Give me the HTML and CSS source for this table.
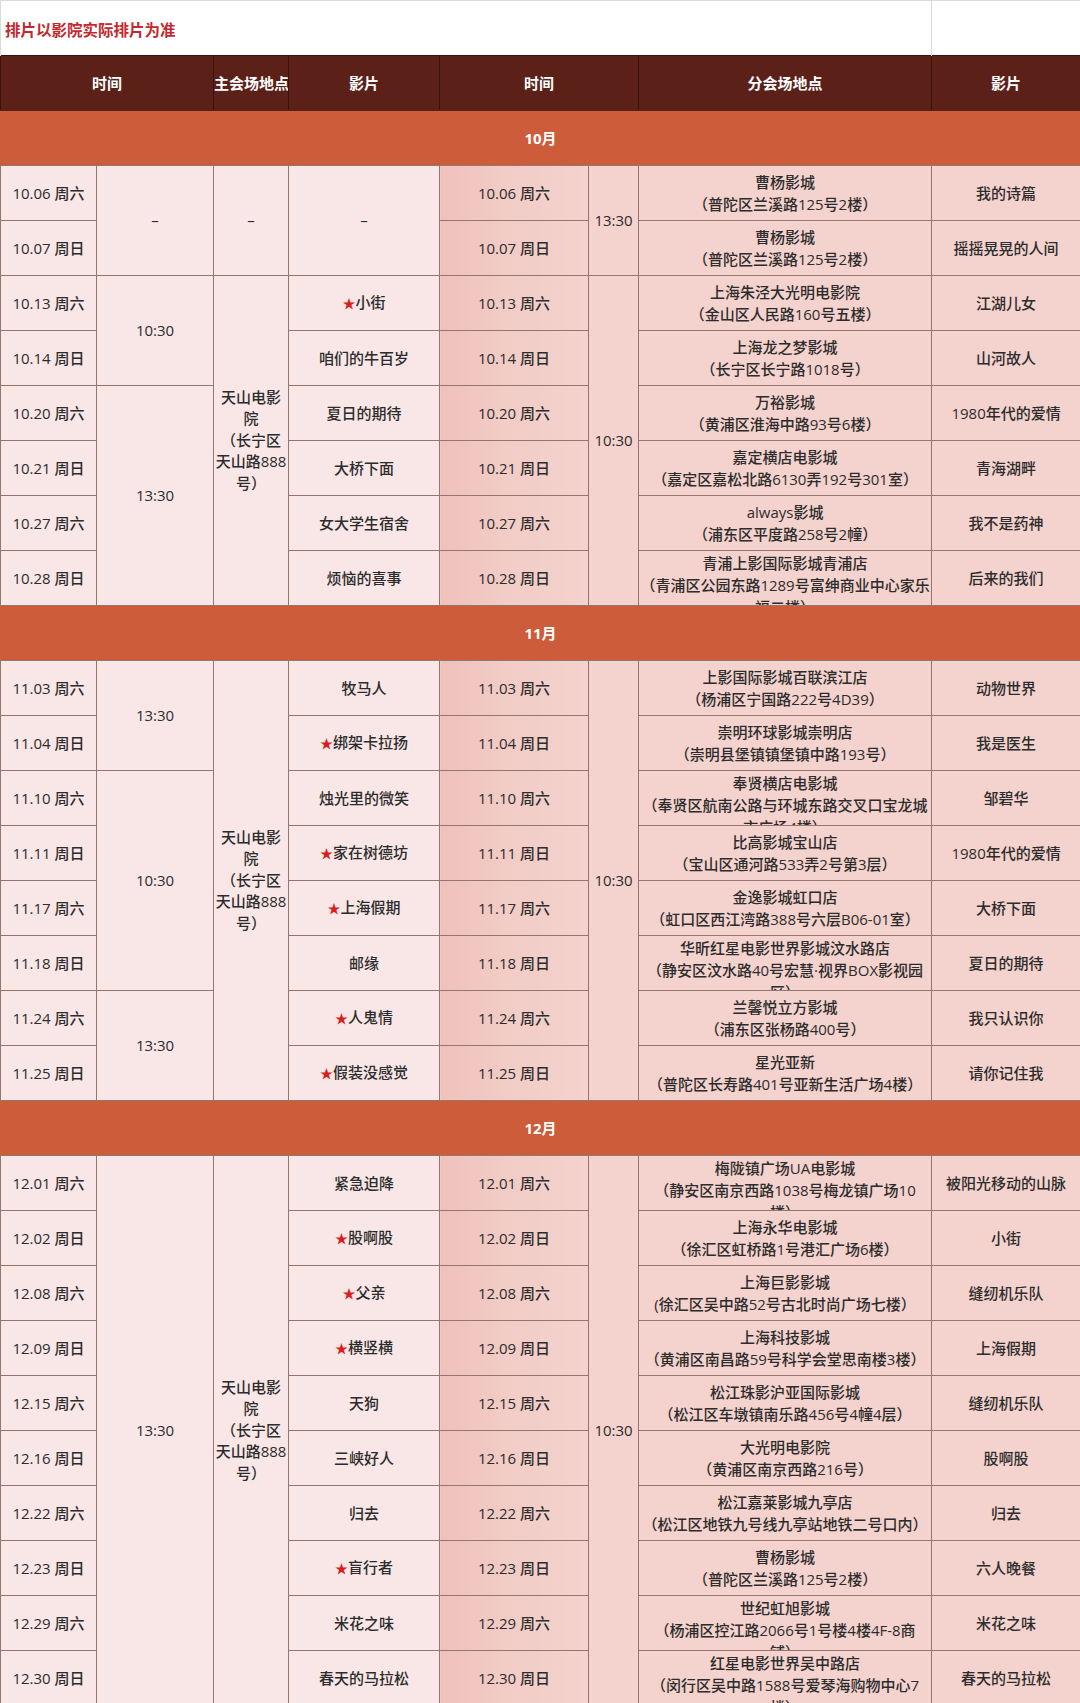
FILE: index.html
```html
<!DOCTYPE html>
<html lang="zh-CN">
<head>
<meta charset="utf-8">
<title>排片表</title>
<link rel="stylesheet" href="styles.css">
</head>
<body>
<table class="sched">
  <colgroup>
    <col class="c1"><col class="c2"><col class="c3"><col class="c4">
    <col class="c5"><col class="c6"><col class="c7"><col class="c8">
  </colgroup>
  <tbody>
    <tr class="note-row">
      <td colspan="7" class="note">排片以影院实际排片为准</td>
      <td class="note-side"></td>
    </tr>
    <tr class="head">
      <th colspan="2">时间</th>
      <th>主会场地点</th>
      <th>影片</th>
      <th colspan="2">时间</th>
      <th>分会场地点</th>
      <th>影片</th>
    </tr>

    <tr class="month"><td colspan="8">10月</td></tr>
    <tr>
      <td class="l">10.06 周六</td>
      <td class="l" rowspan="2">–</td>
      <td class="l" rowspan="2">–</td>
      <td class="l" rowspan="2">–</td>
      <td class="rd">10.06 周六</td>
      <td class="r" rowspan="2">13:30</td>
      <td class="r"><div class="v">曹杨影城<br>（普陀区兰溪路125号2楼）</div></td>
      <td class="r">我的诗篇</td>
    </tr>
    <tr>
      <td class="l">10.07 周日</td>
      <td class="rd">10.07 周日</td>
      <td class="r"><div class="v">曹杨影城<br>（普陀区兰溪路125号2楼）</div></td>
      <td class="r">摇摇晃晃的人间</td>
    </tr>
    <tr>
      <td class="l">10.13 周六</td>
      <td class="l" rowspan="2">10:30</td>
      <td class="l mv" rowspan="6">天山电影<br>院<br>（长宁区<br>天山路888<br>号）</td>
      <td class="l"><span class="star">★</span>小街</td>
      <td class="rd">10.13 周六</td>
      <td class="r" rowspan="6">10:30</td>
      <td class="r"><div class="v">上海朱泾大光明电影院<br>（金山区人民路160号五楼）</div></td>
      <td class="r">江湖儿女</td>
    </tr>
    <tr>
      <td class="l">10.14 周日</td>
      <td class="l">咱们的牛百岁</td>
      <td class="rd">10.14 周日</td>
      <td class="r"><div class="v">上海龙之梦影城<br>（长宁区长宁路1018号）</div></td>
      <td class="r">山河故人</td>
    </tr>
    <tr>
      <td class="l">10.20 周六</td>
      <td class="l" rowspan="4">13:30</td>
      <td class="l">夏日的期待</td>
      <td class="rd">10.20 周六</td>
      <td class="r"><div class="v">万裕影城<br>（黄浦区淮海中路93号6楼）</div></td>
      <td class="r">1980年代的爱情</td>
    </tr>
    <tr>
      <td class="l">10.21 周日</td>
      <td class="l">大桥下面</td>
      <td class="rd">10.21 周日</td>
      <td class="r"><div class="v">嘉定横店电影城<br>（嘉定区嘉松北路6130弄192号301室）</div></td>
      <td class="r">青海湖畔</td>
    </tr>
    <tr>
      <td class="l">10.27 周六</td>
      <td class="l">女大学生宿舍</td>
      <td class="rd">10.27 周六</td>
      <td class="r"><div class="v">always影城<br>（浦东区平度路258号2幢）</div></td>
      <td class="r">我不是药神</td>
    </tr>
    <tr>
      <td class="l">10.28 周日</td>
      <td class="l">烦恼的喜事</td>
      <td class="rd">10.28 周日</td>
      <td class="r"><div class="v">青浦上影国际影城青浦店<br>（青浦区公园东路1289号富绅商业中心家乐<br>福二楼）</div></td>
      <td class="r">后来的我们</td>
    </tr>

    <tr class="month"><td colspan="8">11月</td></tr>
    <tr>
      <td class="l">11.03 周六</td>
      <td class="l" rowspan="2">13:30</td>
      <td class="l mv" rowspan="8">天山电影<br>院<br>（长宁区<br>天山路888<br>号）</td>
      <td class="l">牧马人</td>
      <td class="rd">11.03 周六</td>
      <td class="r" rowspan="8">10:30</td>
      <td class="r"><div class="v">上影国际影城百联滨江店<br>（杨浦区宁国路222号4D39）</div></td>
      <td class="r">动物世界</td>
    </tr>
    <tr>
      <td class="l">11.04 周日</td>
      <td class="l"><span class="star">★</span>绑架卡拉扬</td>
      <td class="rd">11.04 周日</td>
      <td class="r"><div class="v">崇明环球影城崇明店<br>（崇明县堡镇镇堡镇中路193号）</div></td>
      <td class="r">我是医生</td>
    </tr>
    <tr>
      <td class="l">11.10 周六</td>
      <td class="l" rowspan="4">10:30</td>
      <td class="l">烛光里的微笑</td>
      <td class="rd">11.10 周六</td>
      <td class="r"><div class="v">奉贤横店电影城<br>（奉贤区航南公路与环城东路交叉口宝龙城<br>市广场4楼）</div></td>
      <td class="r">邹碧华</td>
    </tr>
    <tr>
      <td class="l">11.11 周日</td>
      <td class="l"><span class="star">★</span>家在树德坊</td>
      <td class="rd">11.11 周日</td>
      <td class="r"><div class="v">比高影城宝山店<br>（宝山区通河路533弄2号第3层）</div></td>
      <td class="r">1980年代的爱情</td>
    </tr>
    <tr>
      <td class="l">11.17 周六</td>
      <td class="l"><span class="star">★</span>上海假期</td>
      <td class="rd">11.17 周六</td>
      <td class="r"><div class="v">金逸影城虹口店<br>（虹口区西江湾路388号六层B06-01室）</div></td>
      <td class="r">大桥下面</td>
    </tr>
    <tr>
      <td class="l">11.18 周日</td>
      <td class="l">邮缘</td>
      <td class="rd">11.18 周日</td>
      <td class="r"><div class="v">华昕红星电影世界影城汶水路店<br>（静安区汶水路40号宏慧·视界BOX影视园<br>区）</div></td>
      <td class="r">夏日的期待</td>
    </tr>
    <tr>
      <td class="l">11.24 周六</td>
      <td class="l" rowspan="2">13:30</td>
      <td class="l"><span class="star">★</span>人鬼情</td>
      <td class="rd">11.24 周六</td>
      <td class="r"><div class="v">兰馨悦立方影城<br>（浦东区张杨路400号）</div></td>
      <td class="r">我只认识你</td>
    </tr>
    <tr>
      <td class="l">11.25 周日</td>
      <td class="l"><span class="star">★</span>假装没感觉</td>
      <td class="rd">11.25 周日</td>
      <td class="r"><div class="v">星光亚新<br>（普陀区长寿路401号亚新生活广场4楼）</div></td>
      <td class="r">请你记住我</td>
    </tr>

    <tr class="month"><td colspan="8">12月</td></tr>
    <tr>
      <td class="l">12.01 周六</td>
      <td class="l" rowspan="10">13:30</td>
      <td class="l mv" rowspan="10">天山电影<br>院<br>（长宁区<br>天山路888<br>号）</td>
      <td class="l">紧急迫降</td>
      <td class="rd">12.01 周六</td>
      <td class="r" rowspan="10">10:30</td>
      <td class="r"><div class="v">梅陇镇广场UA电影城<br>（静安区南京西路1038号梅龙镇广场10<br>楼）</div></td>
      <td class="r">被阳光移动的山脉</td>
    </tr>
    <tr>
      <td class="l">12.02 周日</td>
      <td class="l"><span class="star">★</span>股啊股</td>
      <td class="rd">12.02 周日</td>
      <td class="r"><div class="v">上海永华电影城<br>（徐汇区虹桥路1号港汇广场6楼）</div></td>
      <td class="r">小街</td>
    </tr>
    <tr>
      <td class="l">12.08 周六</td>
      <td class="l"><span class="star">★</span>父亲</td>
      <td class="rd">12.08 周六</td>
      <td class="r"><div class="v">上海巨影影城<br>(徐汇区吴中路52号古北时尚广场七楼）</div></td>
      <td class="r">缝纫机乐队</td>
    </tr>
    <tr>
      <td class="l">12.09 周日</td>
      <td class="l"><span class="star">★</span>横竖横</td>
      <td class="rd">12.09 周日</td>
      <td class="r"><div class="v">上海科技影城<br>（黄浦区南昌路59号科学会堂思南楼3楼）</div></td>
      <td class="r">上海假期</td>
    </tr>
    <tr>
      <td class="l">12.15 周六</td>
      <td class="l">天狗</td>
      <td class="rd">12.15 周六</td>
      <td class="r"><div class="v">松江珠影沪亚国际影城<br>（松江区车墩镇南乐路456号4幢4层）</div></td>
      <td class="r">缝纫机乐队</td>
    </tr>
    <tr>
      <td class="l">12.16 周日</td>
      <td class="l">三峡好人</td>
      <td class="rd">12.16 周日</td>
      <td class="r"><div class="v">大光明电影院<br>（黄浦区南京西路216号）</div></td>
      <td class="r">股啊股</td>
    </tr>
    <tr>
      <td class="l">12.22 周六</td>
      <td class="l">归去</td>
      <td class="rd">12.22 周六</td>
      <td class="r"><div class="v">松江嘉莱影城九亭店<br>（松江区地铁九号线九亭站地铁二号口内）</div></td>
      <td class="r">归去</td>
    </tr>
    <tr>
      <td class="l">12.23 周日</td>
      <td class="l"><span class="star">★</span>盲行者</td>
      <td class="rd">12.23 周日</td>
      <td class="r"><div class="v">曹杨影城<br>（普陀区兰溪路125号2楼）</div></td>
      <td class="r">六人晚餐</td>
    </tr>
    <tr>
      <td class="l">12.29 周六</td>
      <td class="l">米花之味</td>
      <td class="rd">12.29 周六</td>
      <td class="r"><div class="v">世纪虹旭影城<br>（杨浦区控江路2066号1号楼4楼4F-8商<br>铺）</div></td>
      <td class="r">米花之味</td>
    </tr>
    <tr>
      <td class="l">12.30 周日</td>
      <td class="l">春天的马拉松</td>
      <td class="rd">12.30 周日</td>
      <td class="r"><div class="v">红星电影世界吴中路店<br>（闵行区吴中路1588号爱琴海购物中心7<br>楼）</div></td>
      <td class="r">春天的马拉松</td>
    </tr>
  </tbody>
</table>
</body>
</html>
```

FILE: styles.css
```css
html, body {
  margin: 0;
  padding: 0;
  background: #ffffff;
}

body {
  width: 1080px;
  height: 1703px;
  overflow: hidden;
  font-family: "Open Sans", "Noto Sans CJK SC", sans-serif;
  color: #2c2c2c;
}

.sched {
  border-collapse: collapse;
  table-layout: fixed;
  width: 1080px;
}

.c1 { width: 96px; }
.c2 { width: 117px; }
.c3 { width: 75px; }
.c4 { width: 151px; }
.c5 { width: 149px; }
.c6 { width: 50px; }
.c7 { width: 293px; }
.c8 { width: 149px; }

.sched tr {
  height: 55px;
}

.sched td,
.sched th {
  border: 1px solid #957570;
  padding: 0;
  text-align: center;
  vertical-align: middle;
  font-size: 15px;
  line-height: 21px;
  font-weight: 500;
  white-space: nowrap;
  overflow: hidden;
}

.sched .note-row td {
  background: #ffffff;
  border-color: #dadada;
  border-bottom: none;
}

.sched .note {
  text-align: left;
  padding-left: 4px;
  padding-top: 3px;
  color: #c3282e;
  font-weight: bold;
  font-size: 15.5px;
  font-family: "Noto Sans CJK SC", sans-serif;
}

.sched .head th {
  background: #5b2119;
  color: #ffffff;
  font-weight: bold;
  border-color: #3a130e;
  border-bottom-color: #5b2119;
}

.sched .month td {
  background: #cd5c3b;
  color: #ffffff;
  font-weight: bold;
  border-left-color: #cd5c3b;
  border-right-color: #cd5c3b;
  border-top-color: #6e3a30;
}

.l {
  background: #f9e7e7;
}

.rd {
  background: linear-gradient(to right, #efc1ba 0%, #f2ccc6 45%, #f4d2cd 100%);
}

.r {
  background: #f4d2cd;
}

.sched .mv {
  line-height: 21.5px;
}

.v {
  height: 53px;
  overflow: hidden;
  display: flex;
  flex-direction: column;
  justify-content: safe center;
  line-height: 22px;
}

.star {
  color: #d71f1f;
  font-size: 13px;
}
```
